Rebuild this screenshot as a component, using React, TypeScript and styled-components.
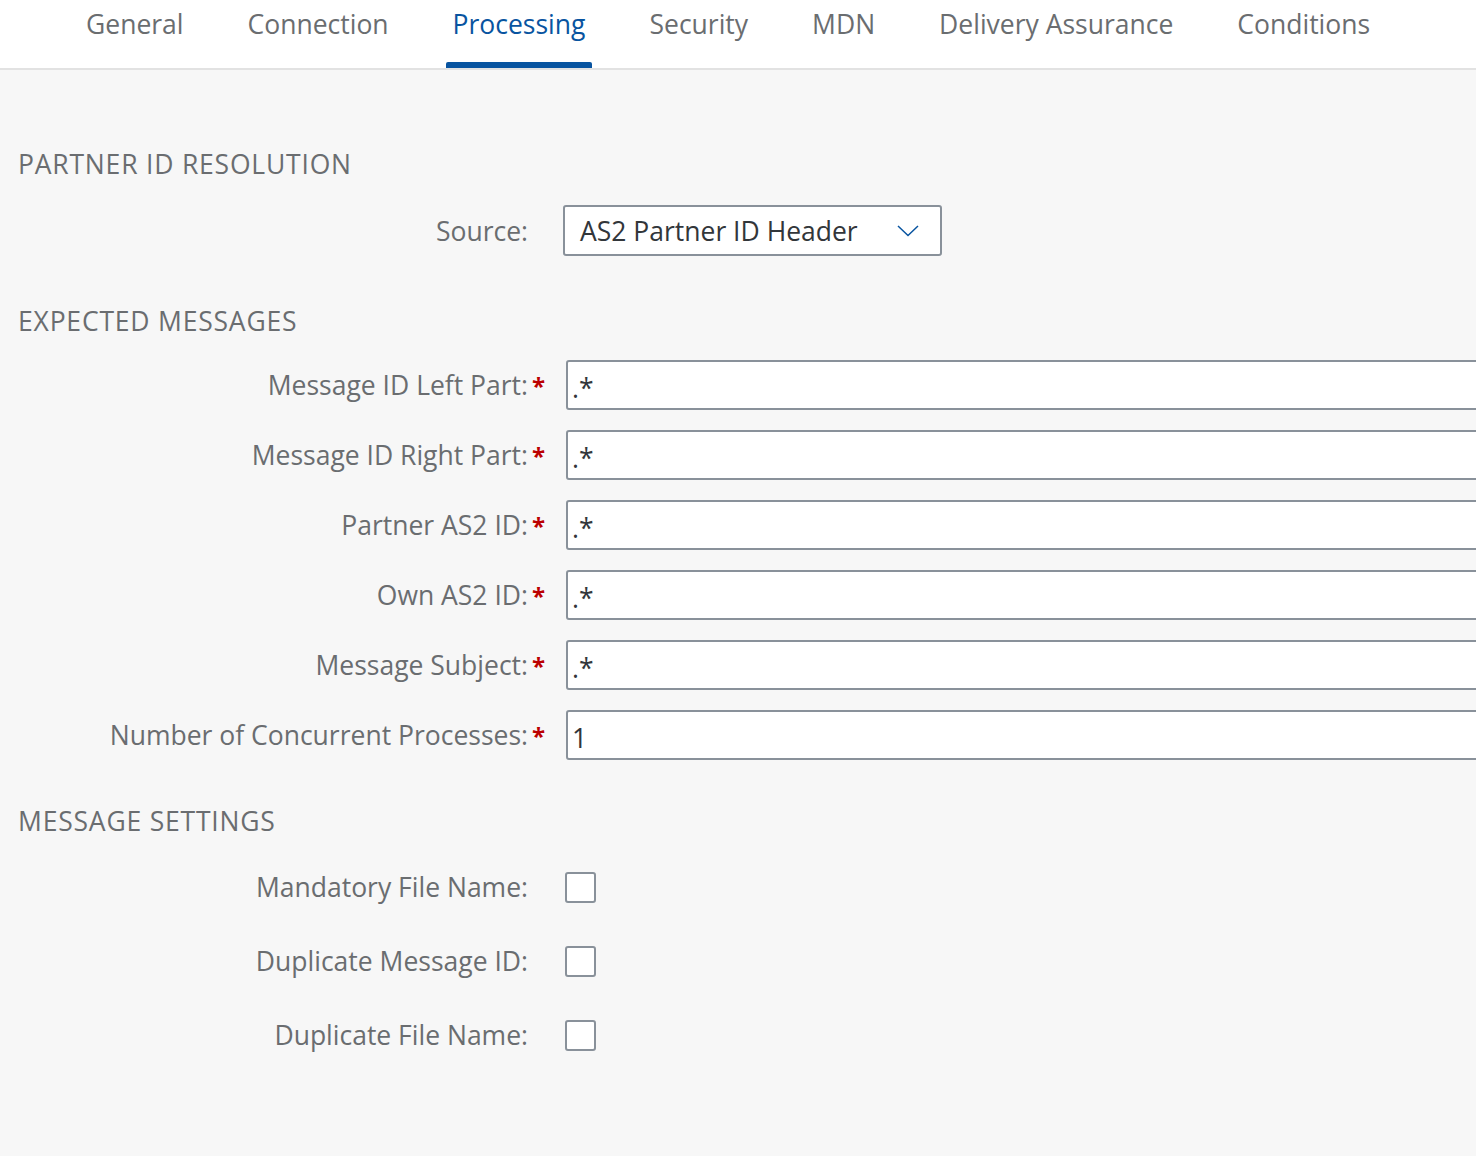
import * as React from 'react'
import styled, {createGlobalStyle} from 'styled-components'

const Global = createGlobalStyle`
    html, body {
        margin: 0;
        padding: 0;
        background: #f7f7f7;
        overflow: hidden;
    }
    body {
        font-family: "Open Sans", "Noto Sans", sans-serif;
        color: #32363a;
    }
`

const Page = styled.div`
    width: 1476px;
    height: 1156px;
    display: flex;
    flex-direction: column;
    background: #f7f7f7;
    overflow: hidden;
`

const TabBar = styled.div`
    height: 68px;
    flex-shrink: 0;
    background: #fff;
    border-bottom: 2px solid #e2e2e2;
    display: flex;
    align-items: stretch;
    padding-left: 79px;
    gap: 50px;
`

const Tab = styled.div<{active?: boolean}>`
    position: relative;
    padding: 4px 7px 0;
    font-size: 26.5px;
    line-height: 40px;
    color: ${p => p.active ? '#0854a0' : '#6a6d70'};
    &::after {
        content: '';
        display: ${p => p.active ? 'block' : 'none'};
        position: absolute;
        left: 0;
        right: 0;
        bottom: 0;
        height: 6px;
        border-radius: 2px 2px 0 0;
        background: #0854a0;
    }
`

const Body = styled.div`
    padding: 78px 0 0 18px;
    display: flex;
    flex-direction: column;
`

const Heading = styled.h3<{mb: number; mt?: number}>`
    margin: ${p => p.mt || 0}px 0 ${p => p.mb}px;
    font-size: 26.5px;
    font-weight: 400;
    line-height: 32px;
    color: #6a6d70;
    letter-spacing: 0.8px;
`

const Rows = styled.div<{gap: number}>`
    display: flex;
    flex-direction: column;
    gap: ${p => p.gap}px;
`

const Row = styled.div`
    display: grid;
    grid-template-columns: 510px 20px 1fr;
    align-items: center;
    min-height: 50px;
`

const Label = styled.label`
    text-align: right;
    font-size: 26.5px;
    color: #6a6d70;
    white-space: nowrap;
`

const Req = styled.span`
    color: #bb0000;
    font-size: 24px;
    font-weight: 700;
    padding-left: 4px;
`

const Field = styled.div<{offset: number; clip?: boolean}>`
    margin-left: ${p => p.offset}px;
    overflow: ${p => p.clip ? 'hidden' : 'visible'};
`

const Input = styled.div`
    width: calc(100% + 10px);
    height: 50px;
    box-sizing: border-box;
    border: 2px solid #89919a;
    border-radius: 3px;
    background: #fff;
    padding: 6px 0 0 4px;
    font-size: 26.5px;
    line-height: 40px;
    color: #32363a;
`

const Select = styled.div`
    width: 379px;
    height: 51px;
    box-sizing: border-box;
    border: 2px solid #89919a;
    border-radius: 3px;
    background: #fff;
    display: flex;
    align-items: center;
    justify-content: space-between;
    padding: 0 21px 0 15px;
    font-size: 26.5px;
    color: #32363a;
`

const Checkbox = styled.div`
    width: 31px;
    height: 31px;
    box-sizing: border-box;
    border: 2px solid #89919a;
    border-radius: 3px;
    background: #fff;
`

const tabs = ['General', 'Connection', 'Processing', 'Security', 'MDN', 'Delivery Assurance', 'Conditions']

const expected = [
    ['Message ID Left Part:', '.*'],
    ['Message ID Right Part:', '.*'],
    ['Partner AS2 ID:', '.*'],
    ['Own AS2 ID:', '.*'],
    ['Message Subject:', '.*'],
    ['Number of Concurrent Processes:', '1'],
]

const settings = ['Mandatory File Name:', 'Duplicate Message ID:', 'Duplicate File Name:']

export default function App() {
    return (
        <Page>
            <Global/>
            <TabBar>
                {tabs.map(t => <Tab key={t} active={t === 'Processing'}>{t}</Tab>)}
            </TabBar>
            <Body>
                <Heading mb={25}>PARTNER ID RESOLUTION</Heading>
                <Row>
                    <Label>Source:</Label>
                    <span/>
                    <Field offset={15}>
                        <Select>
                            <span>AS2 Partner ID Header</span>
                            <svg width="22" height="13" viewBox="0 0 22 13">
                                <polyline points="1,2 11,11.5 21,2" fill="none" stroke="#0854a0" strokeWidth="1.5"/>
                            </svg>
                        </Select>
                    </Field>
                </Row>
                <Heading mt={49} mb={23}>EXPECTED MESSAGES</Heading>
                <Rows gap={20}>
                    {expected.map(([l, v]) => (
                        <Row key={l}>
                            <Label>{l}</Label>
                            <Req>*</Req>
                            <Field offset={18} clip>
                                <Input>{v}</Input>
                            </Field>
                        </Row>
                    ))}
                </Rows>
                <Heading mt={45} mb={25}>MESSAGE SETTINGS</Heading>
                <Rows gap={24}>
                    {settings.map(l => (
                        <Row key={l}>
                            <Label>{l}</Label>
                            <span/>
                            <Field offset={17}>
                                <Checkbox/>
                            </Field>
                        </Row>
                    ))}
                </Rows>
            </Body>
        </Page>
    )
}
